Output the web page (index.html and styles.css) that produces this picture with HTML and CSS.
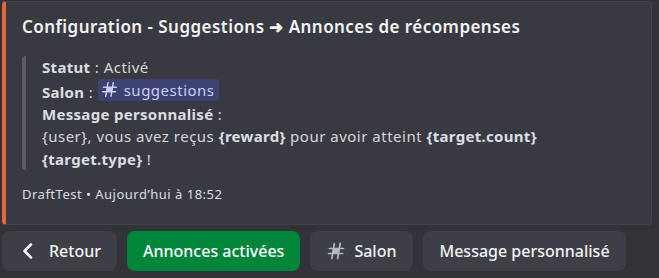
FILE: index.html
```html
<!DOCTYPE html>
<html lang="fr">
<head>
<meta charset="utf-8">
<title>Embed</title>
<link rel="stylesheet" href="styles.css">
</head>
<body>
<div class="embed">
  <div class="title">Configuration - Suggestions ➜ Annonces de récompenses</div>
  <div class="quote">
    <div class="line"><b>Statut</b> : Activé</div>
    <div class="line"><b>Salon</b> : <span class="mention"><svg class="mhash" viewBox="2 2 20 20"><path fill="currentColor" d="M10.99 3.16A1 1 0 1 0 9 2.84L8.15 8H4a1 1 0 0 0 0 2h3.820l-.67 4H3a1 1 0 1 0 0 2h3.82l-.8 4.84a1 1 0 0 0 1.97.32L8.85 16h4.97l-.8 4.84a1 1 0 0 0 1.970.32l.86-5.16H20a1 1 0 1 0 0-2h-3.82l.67-4H21a1 1 0 1 0 0-2h-3.82l.8-4.84a1 1 0 1 0-1.97-.32L15.15 8h-4.97l.8-4.84ZM14.15 14l.67-4H9.850l-.67 4h4.970Z"/></svg>suggestions</span></div>
    <div class="line"><b>Message personnalisé</b> :</div>
    <div class="line">{user}, vous avez reçus <b>{reward}</b> pour avoir atteint <b>{target.count}</b></div>
    <div class="line"><b>{target.type}</b> !</div>
  </div>
  <div class="footer">DraftTest • Aujourd’hui à 18:52</div>
</div>
<div class="actions">
  <button class="btn"><svg class="ico chev" viewBox="0 0 20 20"><path d="M13 3.5 6.5 10 13 16.5" fill="none" stroke="#f2f3f5" stroke-width="2.6" stroke-linecap="round" stroke-linejoin="round"/></svg>Retour</button>
  <button class="btn green">Annonces activées</button>
  <button class="btn salon"><svg class="ico hash" viewBox="0 0 24 24"><path fill="currentColor" d="M10.99 3.16A1 1 0 1 0 9 2.84L8.15 8H4a1 1 0 0 0 0 2h3.82l-.67 4H3a1 1 0 1 0 0 2h3.82l-.8 4.84a1 1 0 0 0 1.97.32L8.85 16h4.97l-.8 4.84a1 1 0 0 0 1.97.32l.86-5.16H20a1 1 0 1 0 0-2h-3.82l.67-4H21a1 1 0 1 0 0-2h-3.82l.8-4.84a1 1 0 1 0-1.970-.32L15.15 8h-4.97l.8-4.84ZM14.15 14l.67-4H9.85l-.67 4h4.97Z"/></svg>Salon</button>
  <button class="btn">Message personnalisé</button>
</div>
</body>
</html>
```
FILE: styles.css
```css
html, body {
  margin: 0;
  padding: 0;
  background: #323339;
  font-family: "Noto Sans", "Open Sans", sans-serif;
  color: #dbdee1;
}
.embed {
  margin: 1px 7px 0 2px;
  background: #393a41;
  border: 1px solid #42434a;
  border-left: 4px solid #e0683f;
  border-radius: 4px;
  padding: 14px 16px 22px 16px;
}
.title {
  font-size: 17px;
  line-height: 22px;
  font-weight: 600;
  letter-spacing: 0.45px;
  color: #f2f3f5;
}
.quote {
  margin-top: 18px;
  border-left: 4px solid #5c5d65;
  border-radius: 4px;
  padding-left: 16px;
  font-size: 15px;
  line-height: 22.5px;
  letter-spacing: 0.5px;
  color: #d5d7dc;
}
.quote b { font-weight: 700; color: #dbdee1; letter-spacing: 0.3px; }
.mention {
  display: inline-flex;
  align-items: center;
  gap: 7px;
  background: #3d4270;
  color: #c9cdfb;
  border-radius: 3px;
  padding: 0 4px;
  line-height: 22px;
}
.mhash { width: 15px; height: 15px; }
.footer {
  margin-top: 16px;
  font-size: 13px;
  line-height: 16px;
  letter-spacing: 0.5px;
  color: #dbdee1;
}
.actions {
  display: flex;
  gap: 10px;
  margin: 6px 0 0 2px;
}
.btn {
  display: flex;
  align-items: center;
  gap: 8px;
  height: 40px;
  padding: 0 16px;
  border: 0;
  border-radius: 8px;
  background: #3e3f46;
  color: #f2f3f5;
  font-family: "Noto Sans", "Open Sans", sans-serif;
  font-size: 16px;
  font-weight: 500;
  letter-spacing: 0;
}
.btn.green { background: #00863a; color: #ffffff; }
.btn.salon { padding-right: 17px; }
.ico { width: 20px; height: 20px; }
.chev { margin-right: 3px; }
.hash { color: #b5b8bf; }
```
